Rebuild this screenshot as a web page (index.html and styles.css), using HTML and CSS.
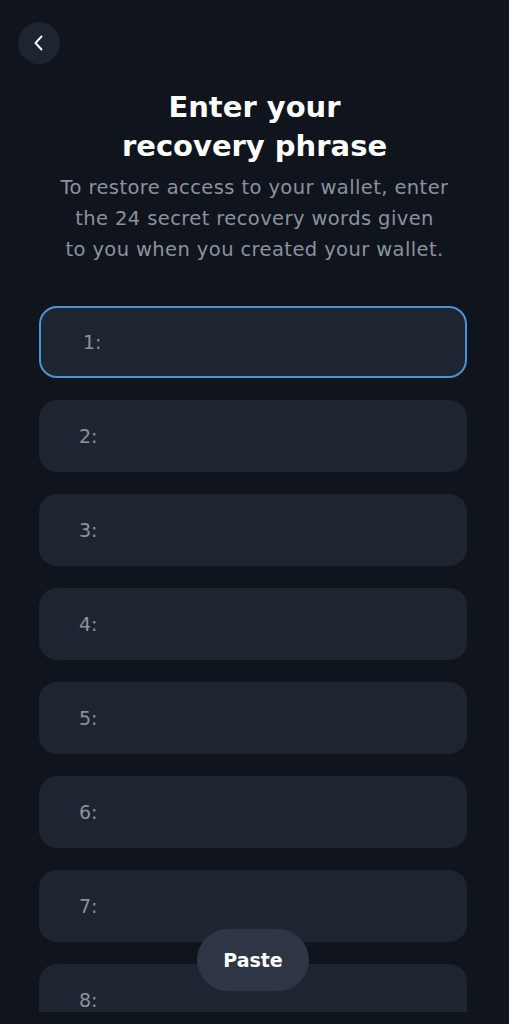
FILE: index.html
```html
<!DOCTYPE html>
<html lang="en">
<head>
<meta charset="utf-8">
<title>Enter your recovery phrase</title>
<link rel="stylesheet" href="styles.css">
</head>
<body>
<div class="screen">
  <header class="topbar">
    <button class="back" aria-label="Back">
      <svg width="16" height="16" viewBox="0 0 16 16"><path d="M10.5 1.5 L4.5 8 L10.5 14.5" fill="none" stroke="#ffffff" stroke-width="1.9" stroke-linecap="round" stroke-linejoin="round"/></svg>
    </button>
  </header>
  <section class="intro">
    <h1 class="title">Enter your<br>recovery phrase</h1>
    <p class="subtitle">To restore access to your wallet, enter<br>the 24 secret recovery words given<br>to you when you created your wallet.</p>
  </section>
  <div class="words">
    <div class="word focused"><span class="num n1">1:</span></div>
    <div class="word"><span class="num">2:</span></div>
    <div class="word"><span class="num">3:</span></div>
    <div class="word"><span class="num">4:</span></div>
    <div class="word"><span class="num">5:</span></div>
    <div class="word"><span class="num">6:</span></div>
    <div class="word"><span class="num">7:</span></div>
    <div class="word"><span class="num">8:</span></div>
  </div>
</div>
<button class="paste">Paste</button>
</body>
</html>
```
FILE: styles.css
```css
html, body {
  margin: 0;
  padding: 0;
  background: #10151d;
}
body {
  font-family: "DejaVu Sans", "Open Sans", sans-serif;
  color: #ffffff;
  width: 509px;
  height: 1024px;
  overflow: hidden;
  position: relative;
}
.screen {
  height: 1012px;
  overflow: hidden;
  display: flex;
  flex-direction: column;
}
.topbar {
  padding: 22px 0 0 18px;
  height: 42px;
}
.back {
  width: 42px;
  height: 42px;
  border-radius: 50%;
  border: none;
  background: #1e2530;
  display: flex;
  align-items: center;
  justify-content: center;
  padding: 0;
}
.intro {
  text-align: center;
  padding-top: 24px;
}
.title {
  margin: 0;
  font-size: 29px;
  line-height: 39px;
  font-weight: 700;
  color: #ffffff;
}
.subtitle {
  margin: 6px 0 0;
  font-size: 19.5px;
  line-height: 31px;
  color: #8b929d;
  letter-spacing: 0.4px;
}
.words {
  display: flex;
  flex-direction: column;
  gap: 22px;
  padding: 41px 42px 0 39px;
}
.word {
  flex: none;
  height: 72px;
  border-radius: 18px;
  background: #1e2530;
  display: flex;
  align-items: center;
  padding-left: 40px;
  box-sizing: border-box;
}
.word.focused {
  border: 2px solid #4b93d6;
  padding-left: 42px;
}
.num {
  font-size: 19px;
  color: #8b929d;
}
.paste {
  position: absolute;
  left: 197px;
  top: 929px;
  width: 112px;
  height: 62px;
  border-radius: 31px;
  border: none;
  background: #2e3646;
  color: #ffffff;
  font-family: "DejaVu Sans", "Open Sans", sans-serif;
  font-size: 19px;
  font-weight: 600;
  padding: 0;
}
```
